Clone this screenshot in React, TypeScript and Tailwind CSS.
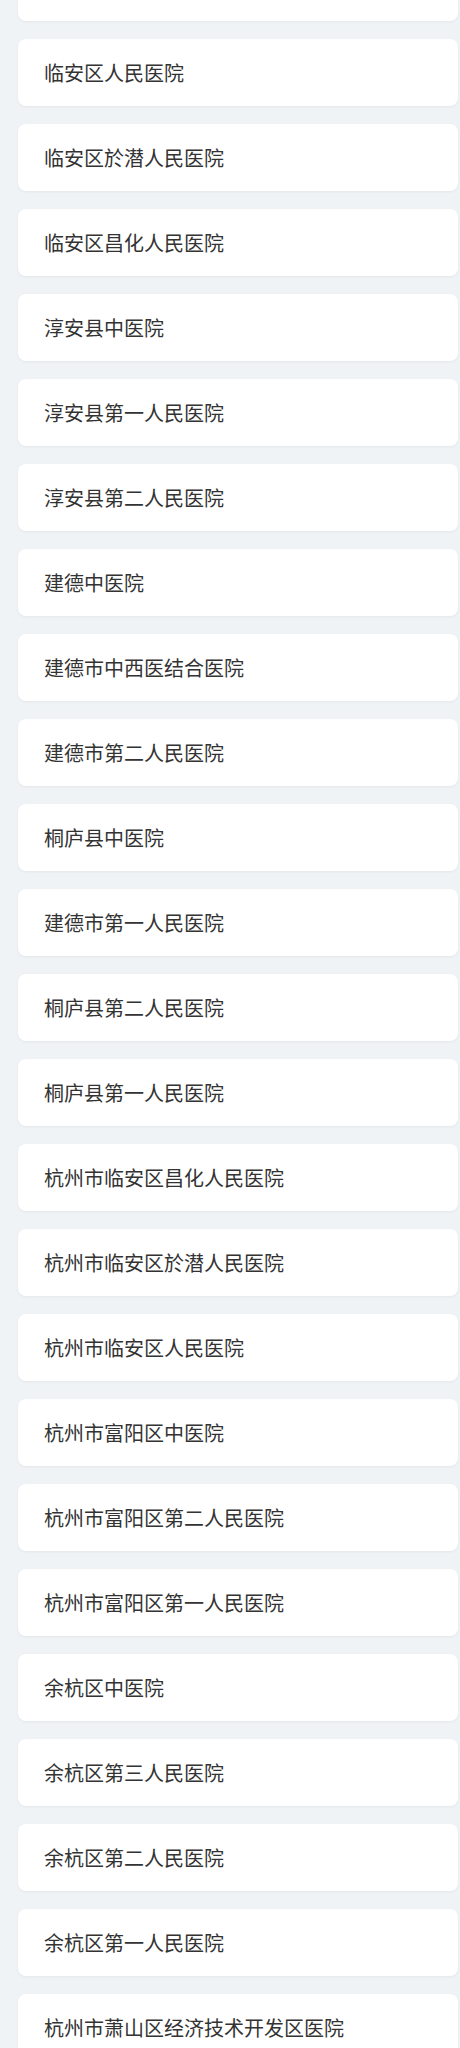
const hospitals = [
  '杭州市临安区中医院',
  '临安区人民医院',
  '临安区於潜人民医院',
  '临安区昌化人民医院',
  '淳安县中医院',
  '淳安县第一人民医院',
  '淳安县第二人民医院',
  '建德中医院',
  '建德市中西医结合医院',
  '建德市第二人民医院',
  '桐庐县中医院',
  '建德市第一人民医院',
  '桐庐县第二人民医院',
  '桐庐县第一人民医院',
  '杭州市临安区昌化人民医院',
  '杭州市临安区於潜人民医院',
  '杭州市临安区人民医院',
  '杭州市富阳区中医院',
  '杭州市富阳区第二人民医院',
  '杭州市富阳区第一人民医院',
  '余杭区中医院',
  '余杭区第三人民医院',
  '余杭区第二人民医院',
  '余杭区第一人民医院',
  '杭州市萧山区经济技术开发区医院',
];

const App = () => {
  return (
    <div
      className="min-h-[2048px] overflow-hidden bg-[#f0f3f6]"
      style={{ fontFamily: '"Noto Sans CJK SC", "Noto Sans", sans-serif' }}
    >
      <div className="mt-[-46px] ml-[18px] mr-[2px] flex flex-col gap-[18px]">
        {hospitals.map((name) => (
          <div
            key={name}
            className="h-[67px] flex items-center pl-[26px] bg-white rounded-lg shadow-[0_1px_3px_rgba(0,0,0,0.05)]"
          >
            <span className="text-[20px] leading-[27px] text-[#333]">{name}</span>
          </div>
        ))}
      </div>
    </div>
  );
};

export default App;
